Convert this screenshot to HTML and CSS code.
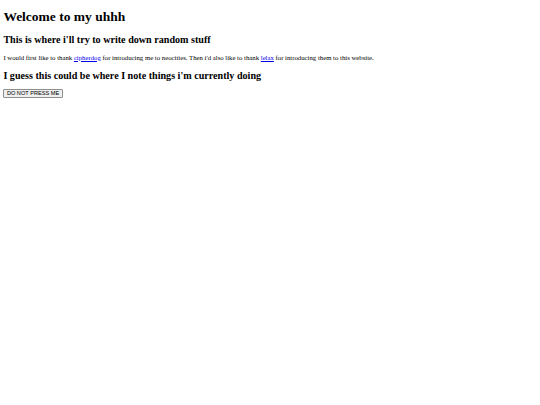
FILE: index.html
```html
<!DOCTYPE html>
<html>
<head>
<meta charset="utf-8">
<title>Welcome</title>
<link rel="stylesheet" href="styles.css">
</head>
<body class="page">
<h1 class="title">Welcome to my uhhh</h1>
<h2 class="subtitle">This is where i'll try to write down random stuff</h2>
<p class="text">I would first like to thank <a class="link" href="#">cipherdog</a> for introducing me to neocities. Then i'd also like to thank <a class="link" href="#">lelax</a> for introducing them to this website.</p>
<h2 class="subtitle subtitle-second">I guess this could be where I note things i'm currently doing</h2>
<button class="btn">DO NOT PRESS ME</button>
</body>
</html>
```

FILE: styles.css
```css
html {
  background: #ffffff;
}
.page {
  margin: 3.375px;
  font-family: "Liberation Serif", "Times New Roman", serif;
  font-size: 6.75px;
  color: #000000;
}
.title {
  font-size: 13.5px;
  font-weight: bold;
  margin: 6px 0 9px;
}
.subtitle {
  font-size: 10.125px;
  font-weight: bold;
  margin: 8.4px 0;
}
.subtitle-second {
  margin-top: 9px;
}
.text {
  margin: 6.75px 0;
}
.link {
  color: #0000ee;
  text-decoration: underline;
}
.btn {
  display: block;
  font-family: "Liberation Sans", Arial, sans-serif;
  font-size: 5.625px;
  line-height: 7px;
  padding: 0 2.5px;
  margin: 0;
  background: #efefef;
  color: #000000;
  border: 1px solid #8f8f8f;
  border-radius: 1px;
}
```
